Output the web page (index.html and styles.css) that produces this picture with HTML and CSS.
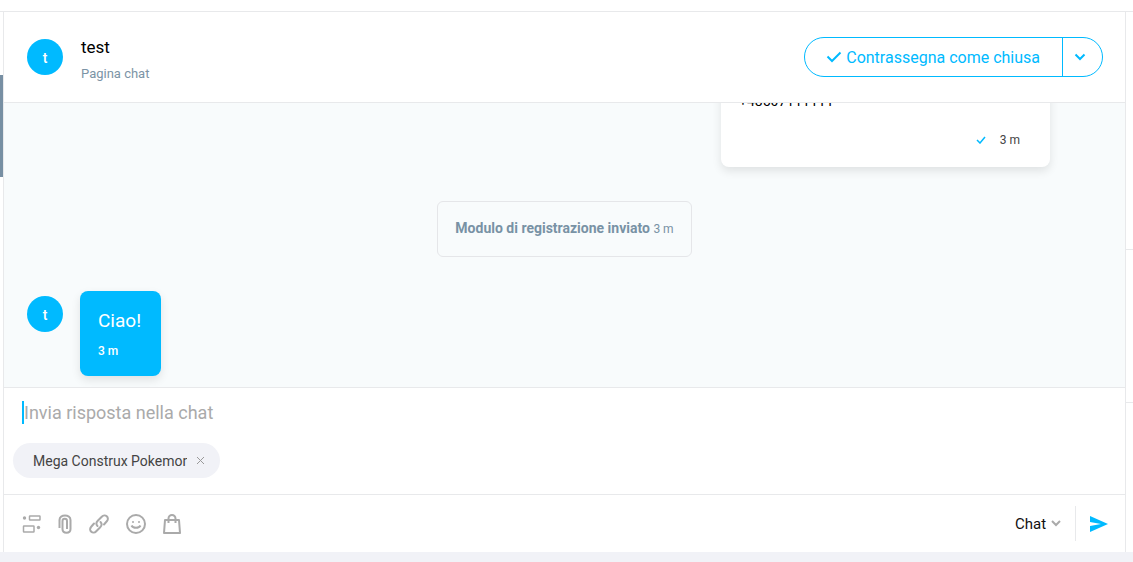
FILE: index.html
```html
<!DOCTYPE html>
<html lang="it">
<head>
	<meta charset="utf-8">
	<title>Chat</title>
	<link rel="stylesheet" href="styles.css">
</head>
<body>
	<div class="topbar"></div>
	<div class="app">
		<div class="list-edge"><div class="scroll-thumb"></div></div>
		<main class="chat">
			<header class="chat-header">
				<div class="avatar">t</div>
				<div class="contact">
					<h1>test</h1>
					<p>Pagina chat</p>
				</div>
				<div class="close-group">
					<button class="close-btn" type="button">
						<svg width="16" height="12" viewBox="0 0 16 12"><path d="M1.500 5.500l4.500 4.500 8.500-8.500" fill="none" stroke="currentColor" stroke-width="2"/></svg>
						Contrassegna come chiusa
					</button>
					<button class="close-more" type="button" aria-label="Altre opzioni">
						<svg width="12" height="8" viewBox="0 0 12 8"><path d="M1.500 1.500L6 6l4.500-4.500" fill="none" stroke="currentColor" stroke-width="2"/></svg>
					</button>
				</div>
			</header>

			<section class="messages">
				<div class="row row-out">
					<div class="bubble bubble-out">
						<p>+48507111111</p>
						<div class="meta">
							<svg width="10" height="8" viewBox="0 0 10 8"><path d="M1 4l3 3 5-6" fill="none" stroke="#00baff" stroke-width="1.5"/></svg>
							<time>3 m</time>
						</div>
					</div>
				</div>
				<div class="event"><strong>Modulo di registrazione inviato</strong> <time>3 m</time></div>
				<div class="row">
					<div class="avatar">t</div>
					<div class="bubble bubble-in">
						<p>Ciao!</p>
						<time>3 m</time>
					</div>
				</div>
			</section>

			<form class="composer">
				<div class="entry">
					<input class="reply" type="text" placeholder="Invia risposta nella chat" aria-label="Invia risposta nella chat">
					<div class="chip">
						<span>Mega Construx Pokemon</span>
						<button type="button" aria-label="Rimuovi">
							<svg width="9" height="9" viewBox="0 0 9 9"><path d="M1 1l7 7M8 1L1 8" stroke="#999" fill="none"/></svg>
						</button>
					</div>
				</div>
				<div class="toolbar">
					<div class="tools">
						<button type="button" aria-label="Risposte rapide">
							<svg width="19" height="20" viewBox="0 0 19 20"><g fill="none" stroke="currentColor" stroke-width="1.5"><rect x="7.500" y="2" width="10.500" height="4" rx=".5"/><rect x="1.500" y="12" width="10.500" height="6" rx=".5"/></g><circle cx="2.500" cy="4" r="1.700" fill="currentColor"/><circle cx="16.500" cy="13.500" r="1.700" fill="currentColor"/></svg>
						</button>
						<button type="button" aria-label="Allega file">
							<svg width="14" height="20" viewBox="0 0 14 20"><path d="M1.500 14V6c0-6 11-6 11 0v9c0 5-8 5-8 0V7c0-3 4.500-3 4.500 0v8" fill="none" stroke="currentColor" stroke-width="2"/></svg>
						</button>
						<button type="button" aria-label="Inserisci link">
							<svg width="20" height="20" viewBox="0 0 20 20"><g fill="none" stroke="currentColor" stroke-width="2" stroke-linecap="round"><path d="M8.500 12c-2-2-1-4 .5-5.500l4-4a3.300 3.300 0 0 1 5 4.500l-3 3.500"/><path d="M11.500 8c2 2 1 4-.5 5.500l-4 4a3.300 3.300 0 0 1-5-4.500l3-3.500"/></g></svg>
						</button>
						<button type="button" aria-label="Emoji">
							<svg width="20" height="20" viewBox="0 0 20 20"><circle cx="10" cy="10" r="9" fill="none" stroke="currentColor" stroke-width="2"/><path d="M5.500 11.500c1.500 3 7.500 3 9 0" fill="none" stroke="currentColor" stroke-width="2"/><circle cx="7" cy="8" r="1" fill="currentColor"/><circle cx="13" cy="8" r="1" fill="currentColor"/></svg>
						</button>
						<button type="button" aria-label="Prodotti">
							<svg width="18" height="20" viewBox="0 0 18 20"><path d="M2 6h14l1 13H1zM5.500 9V4.500a3.500 3.500 0 0 1 7 0V9" fill="none" stroke="currentColor" stroke-width="2" stroke-linejoin="round"/></svg>
						</button>
					</div>
					<div class="send-group">
						<label class="channel">
							<select aria-label="Canale"><option>Chat</option></select>
							<svg width="10" height="7" viewBox="0 0 10 7"><path d="M1 1l4 4 4-4" fill="none" stroke="#aaa" stroke-width="2"/></svg>
						</label>
						<button class="send" type="submit" aria-label="Invia">
							<svg width="18" height="16" viewBox="0 0 18 16"><path d="M0 0l18 8-18 8V10l11-2L0 6z" fill="currentColor"/></svg>
						</button>
					</div>
				</div>
			</form>
		</main>
		<aside class="details">
			<div class="panel panel-first"></div>
			<div class="panel"></div>
		</aside>
	</div>
</body>
</html>
```
FILE: styles.css
```css
*{margin: 0; padding: 0; box-sizing: border-box;}
body{min-height: 100vh; display: flex; flex-direction: column; background: #f1f2f7; font-family: Roboto, "Liberation Sans", sans-serif; color: #000; overflow: hidden;}
button{border: 0; background: none; font: inherit; color: inherit; cursor: pointer;}
svg{display: block; flex: none;}

.topbar{height: 12px; background: #fff; border-bottom: 1px solid #e8e9eb;}
.app{flex: 1; display: flex; margin-bottom: 10px; background: #fff;}
.list-edge{width: 3px; padding-top: 63px;}
.scroll-thumb{height: 102px; background: #778fa3;}
.chat{flex: 1; min-width: 0; display: flex; flex-direction: column; border-left: 1px solid #e8e9eb; border-right: 1px solid #e8e9eb;}
.details{width: 7px;}
.panel{height: 153px; border-bottom: 1px solid #e8e9eb;}
.panel-first{height: 238px;}

.avatar{width: 36px; height: 36px; flex: none; border-radius: 50%; background: #00baff; color: #fff; font-size: 14px; font-weight: 500; line-height: 38px; text-align: center;}

.chat-header{height: 91px; display: flex; align-items: center; gap: 18px; padding: 0 22px 0 23px; border-bottom: 1px solid #e8e9eb;}
.contact{flex: 1; padding-top: 4px;}
.contact h1{font-size: 17px; font-weight: 400; line-height: 24px;}
.contact p{margin-top: 6px; font-size: 13px; line-height: 18px; color: #7c94a6;}
.close-group{display: flex; height: 40px; border: 1px solid #00baff; border-radius: 20px; color: #00baff;}
.close-btn{display: flex; align-items: center; gap: 4px; padding: 0 22px 0 21px; font-size: 16px;}
.close-more{display: flex; align-items: center; justify-content: center; width: 40px; padding-right: 6px; border-left: 1px solid #00baff;}

.messages{flex: 1 1 0; min-height: 0; display: flex; flex-direction: column; justify-content: flex-end; gap: 34px; padding: 0 23px 11px; overflow: hidden; background: #f8fbfc;}
.row{display: flex; align-items: flex-start; gap: 17px;}
.row .avatar{margin-top: 5px;}
.row-out{justify-content: flex-end; padding-right: 52px;}
.bubble{border-radius: 8px; box-shadow: 0 4px 10px rgba(0,0,0,.1);}
.bubble-out{width: 329px; padding: 18px; background: #fff;}
.bubble-out p{font-size: 14px; line-height: 24px;}
.meta{display: flex; align-items: center; justify-content: flex-end; gap: 14px; margin-top: 18px; padding-right: 12px; font-size: 12px; line-height: 18px; color: #444;}
.event{align-self: center; padding: 17px; border: 1px solid #e5e6e9; border-radius: 6px; font-size: 14px; line-height: 19px; color: #7892a5;}
.event strong{font-weight: 700;}
.event time{font-size: 12px;}
.bubble-in{padding: 18px 20px 16px 18px; background: #00baff; color: #fff;}
.bubble-in p{font-size: 19px; line-height: 24px;}
.bubble-in time{display: block; margin-top: 9px; font-size: 12px; font-weight: 500; line-height: 18px;}

.entry{height: 107px; padding: 13px 9px 0; border-top: 1px solid #e8e9eb;}
.reply{display: block; width: 98%; height: 23px; margin-left: 9px; border: 0; border-left: 2px solid #00baff; outline: 0; background: none; font-family: inherit; font-size: 18px;}
.reply::placeholder{color: #aaa; opacity: 1;}
.chip{display: inline-flex; align-items: center; height: 35px; margin-top: 19px; padding: 0 15px 0 20px; border-radius: 18px; background: #f1f2f7; font-size: 14px; color: #444;}
.chip span{width: 154px; overflow: hidden; white-space: nowrap;}
.chip button{margin-left: 9px;}
.toolbar{height: 58px; display: flex; align-items: center; justify-content: space-between; padding: 0 17px 0 18px; border-top: 1px solid #e8e9eb;}
.tools{display: flex; align-items: center; gap: 17px; color: #aaa;}
.send-group{display: flex; align-items: center;}
.channel{display: flex; align-items: center; gap: 4px;}
.channel select{appearance: none; border: 0; background: none; font-family: inherit; font-size: 15px; color: #111;}
.send{display: flex; align-items: center; height: 35px; margin-left: 14px; padding-left: 14px; border-left: 1px solid #e8e9eb; color: #00baff;}
```
